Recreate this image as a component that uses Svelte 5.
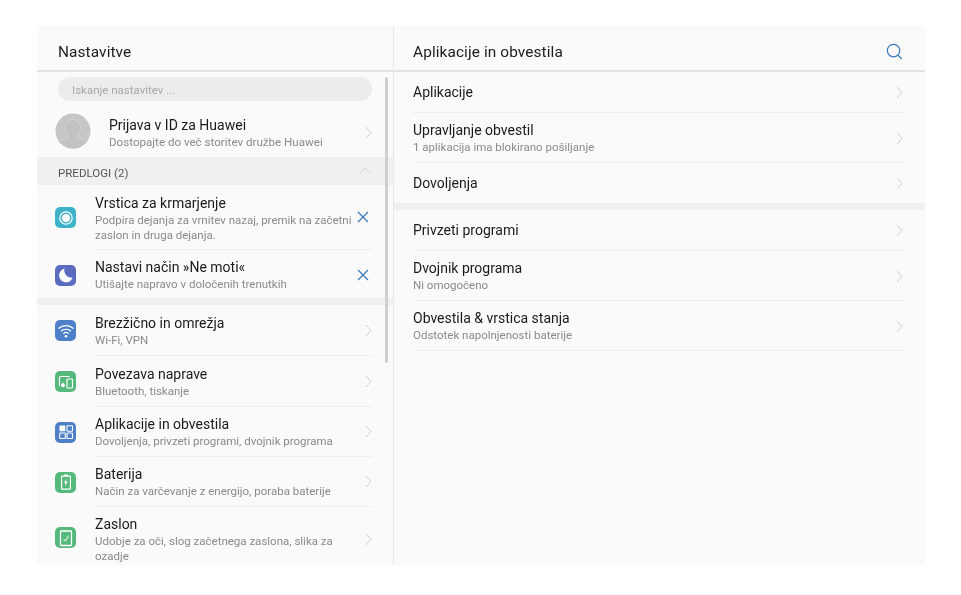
<script>
  const chev = 'M1 1l5 5.500L1 12';
  const rightGroups = [
    [
      { t: 'Aplikacije', h: 41 },
      { t: 'Upravljanje obvestil', s: '1 aplikacija ima blokirano pošiljanje', h: 50 },
      { t: 'Dovoljenja', h: 40, last: true }
    ],
    [
      { t: 'Privzeti programi', h: 41 },
      { t: 'Dvojnik programa', s: 'Ni omogočeno', h: 50 },
      { t: 'Obvestila & vrstica stanja', s: 'Odstotek napolnjenosti baterije', h: 50 }
    ]
  ];
  const settings = [
    { t: 'Brezžično in omrežja', s: 'Wi-Fi, VPN', c: '#4e80c9', i: 'wifi', h: 51 },
    { t: 'Povezava naprave', s: 'Bluetooth, tiskanje', c: '#55b97c', i: 'dev', h: 51 },
    { t: 'Aplikacije in obvestila', s: 'Dovoljenja, privzeti programi, dvojnik programa', c: '#4e80c9', i: 'apps', h: 50 },
    { t: 'Baterija', s: 'Način za varčevanje z energijo, poraba baterije', c: '#55b97c', i: 'bat', h: 50 },
    { t: 'Zaslon', s: 'Udobje za oči, slog začetnega zaslona, slika za ozadje', c: '#55b97c', i: 'screen', h: 60, last: true }
  ];
</script>

{#snippet chevron()}
  <svg class="chev" width="7" height="13" viewBox="0 0 7 13"><path d={chev} /></svg>
{/snippet}

{#snippet cross()}
  <svg class="cross" width="12" height="12" viewBox="0 0 12 12"><path d="M1 1l10 10M11 1L1 11" /></svg>
{/snippet}

{#snippet glyph(i)}
  <svg class="glyph" width="22" height="22" viewBox="0 0 22 22">
    {#if i === 'nav'}
      <circle cx="11" cy="11" r="6.200" fill="none" stroke="#fff" stroke-width="1.200" />
      <circle cx="11" cy="11" r="4" fill="#fff" />
    {:else if i === 'moon'}
      <path d="M9.500 4.500a7 7 0 1 0 8.200 9.300A7.500 7.500 0 0 1 9.500 4.500z" fill="#fff" />
    {:else if i === 'wifi'}
      <path d="M3.500 8.500a11 11 0 0 1 15 0M6 11.200a7.400 7.400 0 0 1 10 0M8.400 13.700a3.800 3.800 0 0 1 5.200 0" fill="none" stroke="#fff" stroke-width="1.200" />
      <circle cx="11" cy="16.200" r="1.300" fill="#fff" />
    {:else if i === 'dev'}
      <path d="M4.500 15V6.500a1 1 0 0 1 1-1h9" fill="none" stroke="#fff" stroke-width="1.200" />
      <rect x="12" y="8" width="5.500" height="9" rx=".8" fill="none" stroke="#fff" stroke-width="1.200" />
      <path d="M8 11.500l1.800 2.300a1.900 1.900 0 1 1-3.600 0z" fill="#fff" />
    {:else if i === 'apps'}
      <rect x="4.500" y="4.500" width="5.800" height="5.800" rx=".6" fill="#fff" />
      <rect x="12" y="4.800" width="5.500" height="5.500" rx=".6" fill="none" stroke="#fff" stroke-width="1.100" />
      <rect x="4.800" y="12" width="5.500" height="5.500" rx=".6" fill="none" stroke="#fff" stroke-width="1.100" />
      <rect x="12" y="12" width="5.500" height="5.500" rx=".6" fill="none" stroke="#fff" stroke-width="1.100" />
    {:else if i === 'bat'}
      <path d="M9 3.500h4v1.500H9z" fill="#fff" />
      <rect x="6.600" y="5.200" width="8.800" height="13" rx=".8" fill="none" stroke="#fff" stroke-width="1.200" />
      <path d="M11.500 7.500L9 12h1.600l-.6 3.500 2.800-4.800h-1.700z" fill="#fff" />
    {:else if i === 'screen'}
      <rect x="5.500" y="4" width="11" height="14.500" rx=".8" fill="none" stroke="#fff" stroke-width="1.300" />
      <path d="M8.500 12.800l2 1 3-5" fill="none" stroke="#fff" stroke-width="1.100" opacity=".85" />
    {/if}
  </svg>
{/snippet}

<div class="page">
  <main class="panel">
    <section class="left">
      <header class="bar"><h1>Nastavitve</h1></header>
      <div class="scroll">
        <div class="search">Iskanje nastavitev ...</div>
        <div class="account">
          <svg class="avatar" width="36" height="36" viewBox="0 0 36 36">
            <defs><clipPath id="av"><circle cx="18" cy="18" r="17.500" /></clipPath></defs>
            <circle cx="18" cy="18" r="17.500" fill="#c6c6c6" />
            <g clip-path="url(#av)">
              <path d="M1 37v-6c1-3.500 8.500-4.500 12.500-6.500v-2.500C11.500 20 10.500 17.500 10.500 14.500 10.500 10 13.500 6.500 18 6.500s7.500 3.500 7.500 8c0 3-1 5.500-3 7.500v2.500C26.500 26.500 34 27.500 35 31v6z" fill="#c2c2c2" stroke="#d8d8d8" stroke-width=".8" />
              <path d="M3 31c3.500-2 7-3 10.500-4.500 2.500 1.500 6.500 1.500 9 0C26 28 29.500 29 33 31v6H3z" fill="#c2c2c2" />
              <path d="M4 33.500c4 2.500 24 2.500 28 0v4H4z" fill="#f4f4f4" />
            </g>
          </svg>
          <div class="txt">
            <div class="t">Prijava v ID za Huawei</div>
            <div class="s">Dostopajte do več storitev družbe Huawei</div>
          </div>
          {@render chevron()}
        </div>
        <div class="predlogi">
          <span>PREDLOGI (2)</span>
          <svg width="14" height="8" viewBox="0 0 14 8"><path d="M1 7l6-6 6 6" fill="none" stroke="#d6d6d6" stroke-width="1" /></svg>
        </div>
        <div class="row tall">
          <span class="ico nav">{@render glyph('nav')}</span>
          <div class="body ruled">
            <div class="txt">
              <div class="t">Vrstica za krmarjenje</div>
              <div class="s">Podpira dejanja za vrnitev nazaj, premik na začetni zaslon in druga dejanja.</div>
            </div>
            {@render cross()}
          </div>
        </div>
        <div class="row dnd">
          <span class="ico moon">{@render glyph('moon')}</span>
          <div class="body">
            <div class="txt">
              <div class="t">Nastavi način »Ne moti«</div>
              <div class="s">Utišajte napravo v določenih trenutkih</div>
            </div>
            {@render cross()}
          </div>
        </div>
        <div class="band"></div>
        {#each settings as it}
          <div class="row" class:end={it.last} style:height="{it.h}px">
            <span class="ico" style:background={it.c}>{@render glyph(it.i)}</span>
            <div class="body" class:ruled={!it.last}>
              <div class="txt">
                <div class="t">{it.t}</div>
                <div class="s">{it.s}</div>
              </div>
              {@render chevron()}
            </div>
          </div>
        {/each}
        <div class="thumb"></div>
      </div>
    </section>
    <section class="right">
      <header class="bar">
        <h1>Aplikacije in obvestila</h1>
        <svg class="loupe" width="17" height="17" viewBox="0 0 18 18">
          <circle cx="8" cy="8" r="6.600" />
          <path d="M12.600 12.800L16.800 17" />
        </svg>
      </header>
      {#each rightGroups as group, g}
        {#if g > 0}<div class="band"></div>{/if}
        <div class="group">
          {#each group as it}
            <div class="rrow" class:ruled={!it.last} style:height="{it.h}px">
              <div class="txt" class:two={it.s}>
                <div class="t">{it.t}</div>
                {#if it.s}<div class="s">{it.s}</div>{/if}
              </div>
              {@render chevron()}
            </div>
          {/each}
        </div>
      {/each}
    </section>
  </main>
</div>

<style>
  :global(body) { margin: 0; background: #fff; }
  .page { width: 961px; height: 595px; padding: 26px 36px 30px 37px; box-sizing: border-box; font-family: Roboto, "Noto Sans", sans-serif; overflow: hidden; }
  .panel { display: flex; height: 539px; background: #fafafa; overflow: hidden; filter: blur(.35px); }
  .left { width: 356px; flex: none; border-right: 1px solid #e8e8e8; display: flex; flex-direction: column; }
  .right { flex: 1; min-width: 0; }
  .bar { height: 46px; padding: 7px 22px 0 21px; border-bottom: 2px solid #e2e2e2; box-sizing: border-box; display: flex; align-items: center; justify-content: space-between; flex: none; }
  .right .bar { padding-left: 19px; }
  h1 { margin: 0; font-size: 15.400px; font-weight: 400; color: #1c1c1c; letter-spacing: .1px; }
  .loupe { fill: none; stroke: #3d7ab8; stroke-width: 1.300; }
  .scroll { position: relative; flex: 1; overflow: hidden; }
  .search { height: 24px; margin: 5px 21px 0 21px; border-radius: 12px; background: #ececec; color: #a8a8a8; font-size: 11.500px; line-height: 26px; padding-left: 14px; }
  .account { height: 56px; display: flex; align-items: center; padding-left: 18px; padding-right: 21px; }
  .avatar { flex: none; margin-right: 18px; margin-top: 4px; }
  .account .txt { flex: 1; padding-top: 8px; }
  .account .s { font-size: 11.600px; }
  .account .chev { margin-top: 6px; }
  .t { font-size: 14px; line-height: 17px; color: #1a1a1a; }
  .s { font-size: 11.500px; line-height: 15px; color: #8a8a8a; margin-top: 1px; }
  .chev { flex: none; fill: none; }
  .chev path { fill: none; stroke: #cfcfcf; stroke-width: 1; }
  .cross { flex: none; margin-left: 4px; margin-right: 3px; margin-top: -1px; }
  .cross path { fill: none; stroke: #3d7ab8; stroke-width: 1.300; }
  .predlogi { height: 28px; background: #f0f0f0; display: flex; align-items: center; justify-content: space-between; padding: 4px 21px 0; box-sizing: border-box; font-size: 11.500px; color: #555; }
  .predlogi svg { margin-top: -5px; }
  .row { display: flex; align-items: center; padding-left: 18px; box-sizing: border-box; }
  .tall { height: 65px; }
  .dnd { height: 48px; }
  .ico { width: 21px; height: 21px; flex: none; border-radius: 5px; margin-right: 19px; display: flex; align-items: center; justify-content: center; overflow: hidden; }
  .nav { background: #3fb3c9; }
  .moon { background: #5a6cbf; }
  .glyph { flex: none; }
  .body { flex: 1; min-width: 0; height: 100%; display: flex; align-items: center; justify-content: space-between; margin-right: 21px; box-sizing: border-box; }
  .ruled { border-bottom: 1px solid #eeeeee; }
  .body .txt { width: 257px; padding-top: 2px; }
  .tall .txt { width: 258px; padding-top: 3px; }
  .dnd .txt { padding-top: 3px; }
  .end .body .txt { padding-top: 6px; }
  .end .ico { margin-top: 1px; }
  .end .chev { margin-top: 4px; }
  .dnd .cross { margin-top: 1px; }
  .dnd .ico { margin-top: 2px; }
  .band { height: 7px; background: #f0f0f0; }
  .thumb { position: absolute; left: 348px; top: 5px; width: 3px; height: 286px; background: #cfcfcf; border-radius: 2px; }
  .group { margin: 0 20px 0 19px; }
  .rrow { display: flex; align-items: center; justify-content: space-between; box-sizing: border-box; padding-right: 2px; }
  .rrow .txt { padding-top: 1px; }
  .rrow .txt.two { padding-top: 2px; }
  .rrow .chev { margin-top: 1px; }
</style>
